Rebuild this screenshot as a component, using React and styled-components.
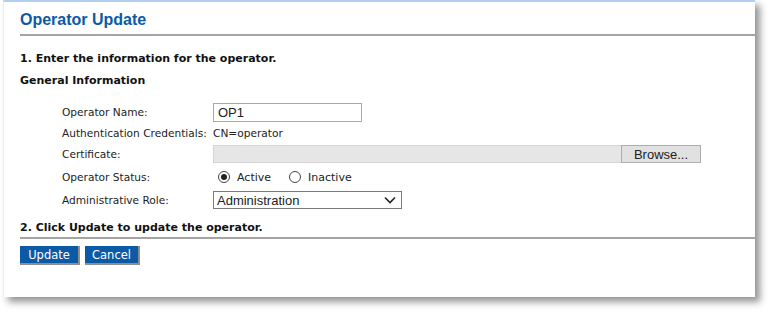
import React from 'react'
import styled, { createGlobalStyle } from 'styled-components'

const GlobalStyle = createGlobalStyle`
  body {
    margin: 0;
    background: #ffffff;
    font-family: "DejaVu Sans", Verdana, sans-serif;
  }
`

const Page = styled.div`
  width: 771px;
  height: 314px;
  padding-left: 3px;
  box-sizing: border-box;
`

const Panel = styled.section`
  width: 752px;
  height: 297px;
  box-sizing: border-box;
  background: #fff;
  border-top: 2px solid #b3cff0;
  border-left: 1px solid #ececec;
  padding: 8px 0 0 16px;
  box-shadow: 5px 5px 7px rgba(0, 0, 0, 0.42);
`

const Title = styled.h1`
  margin: 0;
  font-family: "Liberation Sans", Arial, sans-serif;
  font-size: 16px;
  font-weight: bold;
  color: #0b5aa6;
  line-height: 20px;
  padding-bottom: 4px;
  border-bottom: 2px solid #a4a4a4;
`

const Step = styled.h2`
  margin: 0;
  font-size: 11px;
  font-weight: bold;
  color: #111;
  line-height: 14px;
  padding-top: ${p => p.$top || 0}px;
  padding-bottom: ${p => p.$bottom || 0}px;
  border-bottom: ${p => (p.$rule ? '2px solid #a4a4a4' : 'none')};
`

const Form = styled.div`
  display: grid;
  grid-template-columns: 151px 1fr;
  row-gap: 1px;
  padding: 14px 0 11px 42px;
  align-items: center;
`

const Label = styled.div`
  font-size: 10.6px;
  color: #222;
  height: ${p => p.$h || 20}px;
  display: flex;
  align-items: center;
`

const Value = styled.div`
  font-size: 10.6px;
  color: #222;
  height: ${p => p.$h || 20}px;
  display: flex;
  align-items: center;
`

const TextBox = styled.div`
  width: 149px;
  height: 19px;
  box-sizing: border-box;
  border: 1px solid #a9a9a9;
  font-family: "Liberation Sans", Arial, sans-serif;
  font-size: 13px;
  color: #222;
  padding-left: 4px;
  line-height: 17px;
`

const FileRow = styled.div`
  display: flex;
  width: 488px;
  height: 18px;
`

const FileField = styled.div`
  flex: 1;
  background: #e6e6e6;
  border: 1px solid #d4d4d4;
  border-right: none;
`

const BrowseButton = styled.div`
  width: 80px;
  box-sizing: border-box;
  border: 1px solid #adadad;
  background: #e1e1e1;
  font-family: "Liberation Sans", Arial, sans-serif;
  font-size: 13px;
  color: #222;
  display: flex;
  align-items: center;
  justify-content: center;
`

const RadioGroup = styled.div`
  display: flex;
  align-items: center;
  padding-left: 5px;
  font-size: 11px;
  color: #222;
`

const Radio = styled.span`
  width: 12px;
  height: 12px;
  box-sizing: border-box;
  border-radius: 50%;
  border: 1px solid #444;
  display: inline-flex;
  align-items: center;
  justify-content: center;
  margin-right: 7px;
  margin-left: ${p => p.$gap || 0}px;
  &::after {
    content: '';
    width: 6px;
    height: 6px;
    border-radius: 50%;
    background: ${p => (p.$on ? '#222' : 'transparent')};
  }
`

const Select = styled.div`
  width: 189px;
  height: 18px;
  box-sizing: border-box;
  border: 1px solid #7a7a7a;
  display: flex;
  align-items: center;
  justify-content: space-between;
  padding: 0 5px 0 3px;
  font-family: "Liberation Sans", Arial, sans-serif;
  font-size: 13px;
  color: #222;
`

const Buttons = styled.div`
  display: flex;
  gap: 5px;
  padding-top: 7px;
`

const Button = styled.button`
  height: 17px;
  width: ${p => p.$w}px;
  padding: 0;
  background: #0b5aa6;
  color: #fff;
  font-family: "DejaVu Sans", Verdana, sans-serif;
  font-size: 11.5px;
  border: none;
  border-right: 2px solid #8f8f8f;
  border-bottom: 2px solid #8f8f8f;
  box-sizing: content-box;
`

const Chevron = () => (
  <svg width="12" height="8" viewBox="0 0 12 8">
    <path d="M1 1.5 L6 6.5 L11 1.5" fill="none" stroke="#222" strokeWidth="1.6" />
  </svg>
)

export default function App() {
  return (
    <>
      <GlobalStyle />
      <Page>
        <Panel>
          <Title>Operator Update</Title>
          <Step $top={16}>1. Enter the information for the operator.</Step>
          <Step $top={8}>General Information</Step>
          <Form>
            <Label>Operator Name:</Label>
            <Value><TextBox>OP1</TextBox></Value>
            <Label>Authentication Credentials:</Label>
            <Value>CN=operator</Value>
            <Label>Certificate:</Label>
            <Value>
              <FileRow>
                <FileField />
                <BrowseButton>Browse...</BrowseButton>
              </FileRow>
            </Value>
            <Label $h={24}>Operator Status:</Label>
            <Value $h={24}>
              <RadioGroup>
                <Radio $on />Active
                <Radio $gap={18} />Inactive
              </RadioGroup>
            </Value>
            <Label>Administrative Role:</Label>
            <Value>
              <Select>Administration<Chevron /></Select>
            </Value>
          </Form>
          <Step $bottom={2} $rule>2. Click Update to update the operator.</Step>
          <Buttons>
            <Button $w={58}>Update</Button>
            <Button $w={53}>Cancel</Button>
          </Buttons>
        </Panel>
      </Page>
    </>
  )
}
